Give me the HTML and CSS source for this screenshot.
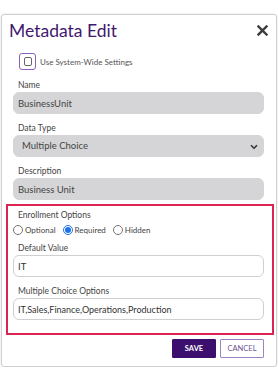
FILE: index.html
```html
<!DOCTYPE html>
<html lang="en">
<head>
    <meta charset="UTF-8">
    <title>Metadata Edit</title>
    <link rel="stylesheet" href="styles.css">
</head>
<body>
    <div class="dialog">
        <div class="dialog-header">
            <h2 class="dialog-title">Metadata Edit</h2>
            <button class="close-btn" aria-label="Close">
                <svg width="11" height="11" viewBox="0 0 11 11">
                    <path d="M1.5 1.5 L9.5 9.5 M9.5 1.5 L1.5 9.5" stroke="#3c3c3c" stroke-width="2.4" stroke-linecap="square" />
                </svg>
            </button>
        </div>

        <div class="fields">
            <label class="system-row">
                <span class="fake-check"><span class="fake-check-inner"></span></span>
                <span>Use System-Wide Settings</span>
            </label>

            <div class="field field-first">
                <label>Name</label>
                <input class="input input-disabled" value="BusinessUnit" readonly />
            </div>

            <div class="field">
                <label>Data Type</label>
                <div class="select-wrap">
                    <div class="input input-disabled select-box">Multiple Choice</div>
                    <svg class="chevron" width="8" height="6" viewBox="0 0 8 6">
                        <path d="M1 1.2 L4 4.2 L7 1.2" fill="none" stroke="#333" stroke-width="1.6" />
                    </svg>
                </div>
            </div>

            <div class="field">
                <label>Description</label>
                <input class="input input-disabled" value="Business Unit" readonly />
            </div>

            <div class="enroll-box">
                <div class="field-label">Enrollment Options</div>
                <div class="radio-row">
                    <label class="radio"><input type="radio" name="enroll" /> Optional</label>
                    <label class="radio"><input type="radio" name="enroll" checked /> Required</label>
                    <label class="radio"><input type="radio" name="enroll" /> Hidden</label>
                </div>

                <div class="field field-mid">
                    <label>Default Value</label>
                    <input class="input" value="IT" />
                </div>

                <div class="field">
                    <label>Multiple Choice Options</label>
                    <input class="input input-long" value="IT,Sales,Finance,Operations,Production" />
                </div>
            </div>

            <div class="button-row">
                <button class="btn btn-save">SAVE</button>
                <button class="btn btn-cancel">CANCEL</button>
            </div>
        </div>
    </div>
</body>
</html>
```

FILE: styles.css
```css
* {
    box-sizing: border-box;
    font-family: Lato, "Open Sans", sans-serif;
}

body {
    margin: 0;
    background: #fff;
}

.dialog {
    margin: 14px 1px 0 1px;
    width: 276px;
    height: 353px;
    border: 1px solid #cfcfcf;
    border-radius: 3px;
    box-shadow: 0 0 2px rgba(0, 0, 0, 0.15);
}

.dialog-header {
    display: flex;
    align-items: center;
    justify-content: space-between;
    height: 30px;
    padding: 0 8px 0 7px;
}

.dialog-title {
    margin: 0;
    font-size: 17.5px;
    font-weight: 400;
    color: #41176f;
}

.close-btn {
    border: none;
    background: none;
    padding: 0;
    width: 11px;
    height: 11px;
    display: flex;
}

.fields {
    padding: 0 0 0 11px;
}

.system-row {
    display: flex;
    align-items: center;
    margin: 8px 0 0 6px;
    height: 17px;
    font-size: 8px;
    color: #555;
}

.fake-check {
    width: 17px;
    height: 17px;
    border: 1.5px solid #8a63b8;
    border-radius: 3px;
    display: flex;
    align-items: center;
    justify-content: center;
    margin-right: 4px;
}

.fake-check-inner {
    width: 8px;
    height: 9px;
    border: 1px solid #666;
    border-radius: 2px;
}

.field label,
.field-label {
    display: block;
    height: 12px;
    line-height: 12px;
    padding-left: 5px;
    font-size: 8.5px;
    color: #444;
}

.field {
    margin-top: 8px;
}

.field-first {
    margin-top: 9px;
}

.input {
    display: block;
    width: 251px;
    height: 22px;
    margin-top: 1px;
    padding: 0 4px;
    border: 1px solid #cfcfcf;
    border-radius: 6px;
    background: #fff;
    font-size: 9.5px;
    color: #333;
    outline: none;
}

.input-long {
    font-size: 9px;
}

.input-disabled {
    background: #d5d5d7;
    border-color: #d5d5d7;
    color: #444;
}

.select-wrap {
    position: relative;
    width: 251px;
}

.select-box {
    line-height: 20px;
    padding-left: 8px;
}

.chevron {
    position: absolute;
    right: 6px;
    top: 9px;
}

.enroll-box {
    margin: 4px 2px 0 -7px;
    border: 2px solid #dc2452;
    padding: 3px 0 13px 5px;
}

.radio-row {
    display: flex;
    align-items: center;
    height: 12px;
    margin-top: 3px;
    font-size: 8px;
    color: #444;
}

.radio {
    display: flex;
    align-items: center;
    margin-right: 7px;
}

.radio input {
    width: 10px;
    height: 10px;
    margin: 0 2px 0 0;
    accent-color: #1a73e8;
}

.field-mid {
    margin-top: 6px;
}

.button-row {
    display: flex;
    justify-content: flex-end;
    gap: 4px;
    margin: 4px 12px 0 0;
}

.btn {
    width: 44px;
    height: 19px;
    padding: 0;
    font-size: 7.5px;
    font-weight: 700;
    border-radius: 1px;
}

.btn-save {
    background: #3c0f6e;
    border: 1px solid #3c0f6e;
    color: #fff;
}

.btn-cancel {
    background: #fff;
    border: 1.5px solid #9c83c2;
    color: #6e5494;
    font-weight: 400;
}
```
